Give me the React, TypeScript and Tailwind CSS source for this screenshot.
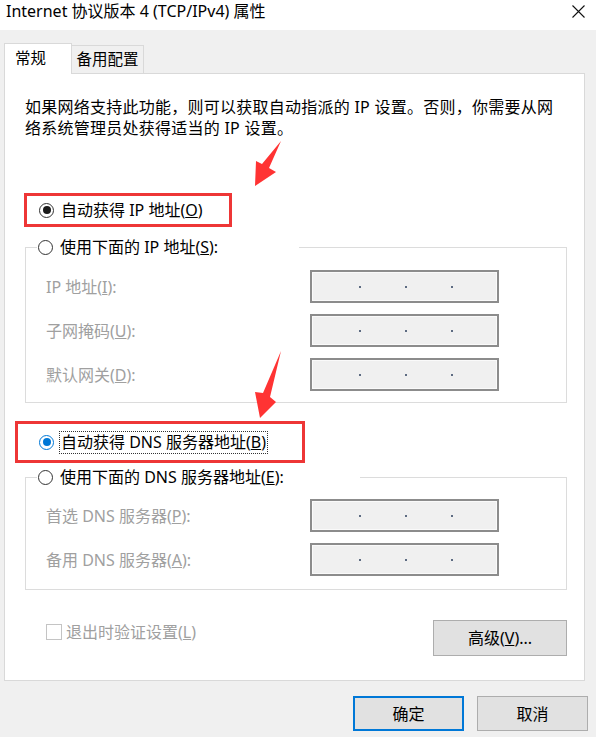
import React from "react";

const Radio = ({ checked, color }: { checked?: boolean; color?: "black" | "blue" }) => (
  <span
    className={
      "flex items-center justify-center w-[15px] h-[15px] rounded-full border bg-white shrink-0 " +
      (color === "blue" ? "border-[#0078d7]" : "border-[#333333]")
    }
  >
    {checked ? (
      <span
        className={
          "block w-[8px] h-[8px] rounded-full " + (color === "blue" ? "bg-[#0078d7]" : "bg-[#1a1a1a]")
        }
      />
    ) : null}
  </span>
);

const IpBox = () => (
  <div className="w-[189px] h-[33px] border-2 border-[#8c8c8c] bg-[#f0f0f0] shadow-[inset_0_0_0_1px_#fafafa] flex items-center pl-[47px] gap-[44px]">
    <span className="block w-[2px] h-[2px] bg-[#5d6b82]" />
    <span className="block w-[2px] h-[2px] bg-[#5d6b82]" />
    <span className="block w-[2px] h-[2px] bg-[#5d6b82]" />
  </div>
);

const Row = ({ label, first }: { label: React.ReactNode; first?: boolean }) => (
  <div className={"flex items-center h-[33px] pl-[20px] " + (first ? "" : "mt-[11px]")}>
    <div className="w-[264px] text-[#a0a0a0] whitespace-nowrap">{label}</div>
    <IpBox />
  </div>
);

export default function App() {
  return (
    <div className="relative w-[596px] h-[737px] bg-[#f0f0f0] overflow-hidden text-[16px] text-black [font-family:'Noto_Sans','Noto_Sans_CJK_SC',sans-serif]">
      {/* Title bar */}
      <div className="h-[30px] bg-white flex items-start justify-between pl-[6px] pr-[11px]">
        <span className="text-[16px] leading-[22px] whitespace-nowrap">Internet 协议版本 4 (TCP/IPv4) 属性</span>
        <svg width="13" height="13" viewBox="0 0 13 13" className="mt-[5px]">
          <path d="M0.5 0.5 L12.5 12.5 M12.5 0.5 L0.5 12.5" stroke="#111" strokeWidth="1.1" fill="none" />
        </svg>
      </div>

      {/* Tabs */}
      <div className="relative z-10 -mb-px mt-[13px] h-[31px] flex items-end pl-[4px]">
        <div className="h-[31px] w-[68px] bg-white border border-b-0 border-[#d9d9d9] flex items-center pl-[10px] text-[15.5px]">
          常规
        </div>
        <div className="h-[28px] mb-[1px] w-[72px] bg-[#f0f0f0] border-t border-r border-[#d9d9d9] flex items-center justify-center text-[15.5px]">
          备用配置
        </div>
      </div>

      {/* Panel */}
      <div className="ml-[4px] w-[581px] h-[608px] border border-[#d9d9d9] bg-white">
        <p className="ml-[20px] mt-[23px] leading-[21px] whitespace-nowrap tracking-[0.25px]">
          如果网络支持此功能，则可以获取自动指派的 IP 设置。否则，你需要从网
          <br />
          络系统管理员处获得适当的 IP 设置。
        </p>

        {/* Red box 1 */}
        <div className="mt-[54px] ml-[19px] w-[208px] h-[34px] border-[3px] border-[#ee3636] flex items-center pl-[12px] gap-[7px]">
          <Radio checked color="black" />
          <span className="whitespace-nowrap leading-[20px]">
            自动获得 IP 地址(<u>O</u>)
          </span>
        </div>

        {/* Group 1 */}
        <fieldset className="mt-[10px] ml-[20px] w-[542px] border border-[#dcdcdc] pb-[11px]">
          <legend className="ml-[11px] w-[262px] h-[20px] flex items-center gap-[7px] pl-[1px] whitespace-nowrap">
            <Radio />
            <span>
              使用下面的 IP 地址(<u>S</u>):
            </span>
          </legend>
          <div className="mt-[13px]">
            <Row first label={<>IP 地址(<u>I</u>):</>} />
            <Row label={<>子网掩码(<u>U</u>):</>} />
            <Row label={<>默认网关(<u>D</u>):</>} />
          </div>
        </fieldset>

        {/* Red box 2 */}
        <div className="mt-[18px] ml-[10px] w-[290px] h-[42px] border-[3px] border-[#ee3636] flex items-center pl-[21px] gap-[5px]">
          <Radio checked color="blue" />
          <span className="whitespace-nowrap leading-[21px] border border-dotted border-[#333] px-[1px]">
            自动获得 DNS 服务器地址(<u>B</u>)
          </span>
        </div>

        {/* Group 2 */}
        <fieldset className="mt-[4px] ml-[20px] w-[542px] border border-[#dcdcdc] pb-[13px]">
          <legend className="ml-[11px] w-[323px] h-[20px] flex items-center gap-[7px] pl-[1px] whitespace-nowrap">
            <Radio />
            <span>
              使用下面的 DNS 服务器地址(<u>E</u>):
            </span>
          </legend>
          <div className="mt-[12px]">
            <Row first label={<>首选 DNS 服务器(<u>P</u>):</>} />
            <Row label={<>备用 DNS 服务器(<u>A</u>):</>} />
          </div>
        </fieldset>

        {/* Bottom row */}
        <div className="mt-[30px] flex items-start justify-between pr-[17px]">
          <div className="flex items-center h-[24px] pl-[41px] gap-[4px]">
            <span className="block w-[16px] h-[16px] border border-[#c4c4c4] bg-white" />
            <span className="text-[#a0a0a0] whitespace-nowrap">
              退出时验证设置(<u>L</u>)
            </span>
          </div>
          <div className="w-[134px] h-[36px] bg-[#e1e1e1] border border-[#adadad] flex items-center justify-center whitespace-nowrap">
            高级(<u>V</u>)...
          </div>
        </div>
      </div>

      {/* Dialog buttons */}
      <div className="mt-[15px] flex justify-end gap-[13px] pr-[8px]">
        <div className="w-[111px] h-[35px] bg-[#e1e1e1] border-2 border-[#0078d7] flex items-center justify-center">
          确定
        </div>
        <div className="w-[111px] h-[35px] bg-[#e1e1e1] border border-[#adadad] flex items-center justify-center">
          取消
        </div>
      </div>

      {/* Annotation arrows */}
      <svg className="absolute inset-0 pointer-events-none" width="596" height="737" viewBox="0 0 596 737">
        <polygon points="281,141 262,164 256,161 255,186 276,172 269,168" fill="#ff3333" />
        <polygon points="281,351 263,393 255,392 260,418 276,402 270,397" fill="#ff3333" />
      </svg>
    </div>
  );
}
